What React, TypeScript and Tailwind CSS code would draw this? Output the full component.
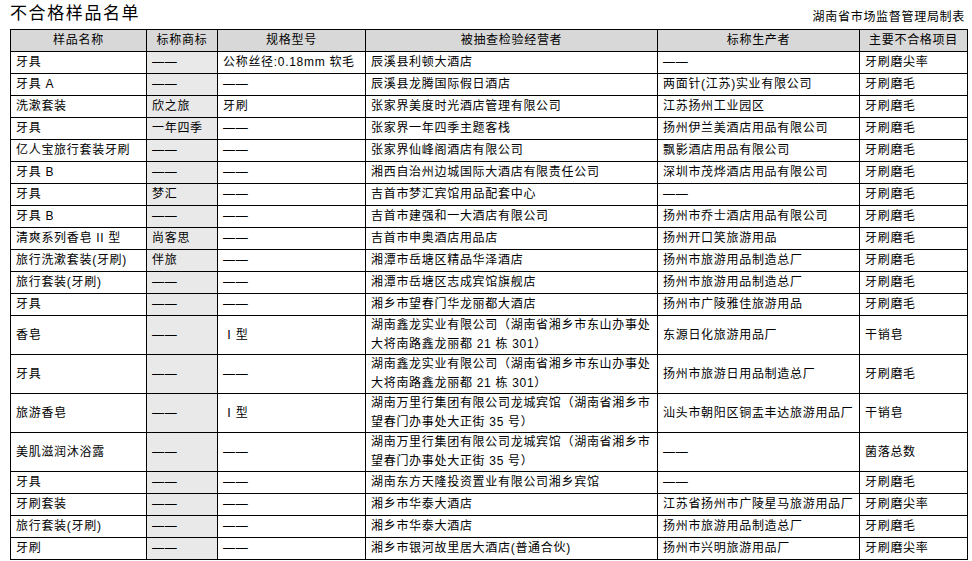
const font = { fontFamily: '"Liberation Sans", "Noto Sans CJK SC", sans-serif' };

type Row = [string, string, string, string, string, string];

const D = '——';

const rows: Row[] = [
  ['牙具', D, '公称丝径:0.18mm 软毛', '辰溪县利顿大酒店', D, '牙刷磨尖率'],
  ['牙具 A', D, D, '辰溪县龙腾国际假日酒店', '两面针(江苏)实业有限公司', '牙刷磨毛'],
  ['洗漱套装', '欣之旅', '牙刷', '张家界美度时光酒店管理有限公司', '江苏扬州工业园区', '牙刷磨毛'],
  ['牙具', '一年四季', D, '张家界一年四季主题客栈', '扬州伊兰美酒店用品有限公司', '牙刷磨毛'],
  ['亿人宝旅行套装牙刷', D, D, '张家界仙峰阁酒店有限公司', '飘影酒店用品有限公司', '牙刷磨毛'],
  ['牙具 B', D, D, '湘西自治州边城国际大酒店有限责任公司', '深圳市茂烨酒店用品有限公司', '牙刷磨毛'],
  ['牙具', '梦汇', D, '吉首市梦汇宾馆用品配套中心', D, '牙刷磨毛'],
  ['牙具 B', D, D, '吉首市建强和一大酒店有限公司', '扬州市乔士酒店用品有限公司', '牙刷磨毛'],
  ['清爽系列香皂 II 型', '尚客思', D, '吉首市申奥酒店用品店', '扬州开口笑旅游用品', '牙刷磨毛'],
  ['旅行洗漱套装(牙刷)', '伴旅', D, '湘潭市岳塘区精品华泽酒店', '扬州市旅游用品制造总厂', '牙刷磨毛'],
  ['旅行套装(牙刷)', D, D, '湘潭市岳塘区志成宾馆旗舰店', '扬州市旅游用品制造总厂', '牙刷磨毛'],
  ['牙具', D, D, '湘乡市望春门华龙丽都大酒店', '扬州市广陵雅佳旅游用品', '牙刷磨毛'],
  ['香皂', D, 'Ⅰ型', '湖南鑫龙实业有限公司（湖南省湘乡市东山办事处|大将南路鑫龙丽都 21 栋 301）', '东源日化旅游用品厂', '干销皂'],
  ['牙具', D, D, '湖南鑫龙实业有限公司（湖南省湘乡市东山办事处|大将南路鑫龙丽都 21 栋 301）', '扬州市旅游日用品制造总厂', '牙刷磨毛'],
  ['旅游香皂', D, 'Ⅰ型', '湖南万里行集团有限公司龙城宾馆（湖南省湘乡市|望春门办事处大正街 35 号）', '汕头市朝阳区铜盂丰达旅游用品厂', '干销皂'],
  ['美肌滋润沐浴露', D, D, '湖南万里行集团有限公司龙城宾馆（湖南省湘乡市|望春门办事处大正街 35 号）', D, '菌落总数'],
  ['牙具', D, D, '湖南东方天隆投资置业有限公司湘乡宾馆', D, '牙刷磨毛'],
  ['牙刷套装', D, D, '湘乡市华泰大酒店', '江苏省扬州市广陵星马旅游用品厂', '牙刷磨尖率'],
  ['旅行套装(牙刷)', D, D, '湘乡市华泰大酒店', '扬州市旅游用品制造总厂', '牙刷磨毛'],
  ['牙刷', D, D, '湘乡市银河故里居大酒店(普通合伙)', '扬州市兴明旅游用品厂', '牙刷磨尖率'],
];

const headers = ['样品名称', '标称商标', '规格型号', '被抽查检验经营者', '标称生产者', '主要不合格项目'];
const widths = [136, 71, 148, 292, 202, 108];

export default function App() {
  return (
    <div className="w-[972px] h-[561px] bg-white text-black overflow-hidden" style={font}>
      {/* Title bar */}
      <div className="flex items-end justify-between h-[29px] pl-[10px] pr-[7px] pb-[5px]">
        <h1 className="text-[17px] leading-[20px] tracking-[1.6px] font-normal">不合格样品名单</h1>
        <span className="text-[12px] leading-[14px] tracking-[0.7px]">湖南省市场监督管理局制表</span>
      </div>

      {/* Table */}
      <table className="ml-[10px] border-collapse table-fixed text-[12px] tracking-[0.7px]">
        <colgroup>
          {widths.map((w, i) => (
            <col key={i} style={{ width: w }} />
          ))}
        </colgroup>
        <thead>
          <tr className="bg-[#d8d8d8]">
            {headers.map((h) => (
              <th key={h} className="border border-black font-normal text-center leading-[21px] p-0 whitespace-nowrap">
                {h}
              </th>
            ))}
          </tr>
        </thead>
        <tbody>
          {rows.map((r, ri) => {
            const double = r[3].includes('|');
            return (
              <tr key={ri}>
                {r.map((cell, ci) => (
                  <td
                    key={ci}
                    className={`border border-black px-[5px] py-0 align-middle whitespace-nowrap overflow-hidden ${
                      double ? 'leading-[19px]' : 'leading-[21px]'
                    } ${ci === 1 ? 'bg-[#e9e9e9]' : ''}`}
                  >
                    {cell.includes('|') ? (
                      <>
                        {cell.split('|')[0]}
                        <br />
                        {cell.split('|')[1]}
                      </>
                    ) : (
                      cell
                    )}
                  </td>
                ))}
              </tr>
            );
          })}
        </tbody>
      </table>
    </div>
  );
}
